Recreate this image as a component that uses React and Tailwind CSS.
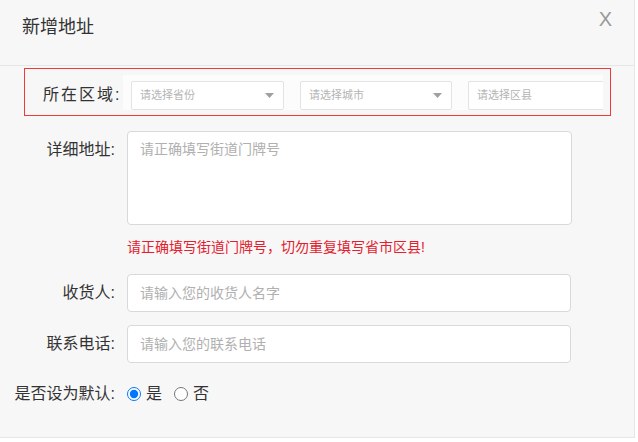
import { useState } from 'react';

const FONT = { fontFamily: '"Liberation Sans", "Noto Sans CJK SC", sans-serif' };

const Caret = () => (
  <svg width="9" height="5" viewBox="0 0 9 5" className="shrink-0">
    <path d="M0 0 L9 0 L4.5 5 Z" fill="#a0a0a0" />
  </svg>
);

const FakeSelect = ({ placeholder, width, caret = true, open = false }) => (
  <div
    className={`flex h-[29px] shrink-0 items-center justify-between rounded-[2px] border border-[#e3e3e3] bg-white pl-[8px] pr-[9px] ${open ? 'border-r-0' : ''}`}
    style={{ width }}
  >
    <span className="text-[11px] text-[#b5b5b5]">{placeholder}</span>
    {caret && <Caret />}
  </div>
);

export default function App() {
  const [isDefault, setIsDefault] = useState('yes');

  return (
    <div className="h-[442px] w-[638px] bg-white" style={FONT}>
      <div className="h-[438px] w-[635px] border-b border-r border-[#e6e6e6] bg-[#f7f7f7]">
        <div className="relative flex h-[66px] items-start border-b border-[#e6e6e6] pl-[22px] pt-[14px]">
          <h2 className="text-[18px] leading-[26px] text-[#333]">新增地址</h2>
          <span className="absolute right-[22px] top-[7px] text-[20px] leading-[24px] text-[#9a9a9a]">X</span>
        </div>

        <div className="ml-[24px] mt-[2px] flex h-[48px] w-[587px] items-start border border-[#f03a3a]">
          <div className="w-[98px] shrink-0 whitespace-nowrap pl-[18px] pt-[16px] text-[16px] leading-[20px] tracking-[2px] text-[#333]">所在区域:</div>
          <div className="mt-[6px] flex h-[35px] w-[480px] shrink-0 items-end gap-[16px] overflow-hidden bg-[#fcfcfc] pl-[8px]">
            <FakeSelect placeholder="请选择省份" width={153} />
            <FakeSelect placeholder="请选择城市" width={152} />
            <FakeSelect placeholder="请选择区县" width={150} caret={false} open />
          </div>
        </div>

        <div className="mt-[15px] flex items-start gap-[12px]">
          <label className="w-[115px] pt-[9px] text-right text-[16px] leading-[20px] text-[#333]">详细地址:</label>
          <textarea
            placeholder="请正确填写街道门牌号"
            className="h-[94px] w-[445px] resize-none rounded-[4px] border border-[#d9d9d9] bg-white px-[12px] py-[7px] text-[14px] leading-[20px] text-[#333] placeholder:text-[#b0b0b0] focus:outline-none"
          />
        </div>
        <p className="ml-[127px] mt-[12px] text-[14px] leading-[20px] text-[#e5202e]">请正确填写街道门牌号，切勿重复填写省市区县!</p>

        <div className="mt-[17px] flex items-center gap-[12px]">
          <label className="w-[115px] text-right text-[16px] text-[#333]">收货人:</label>
          <input
            placeholder="请输入您的收货人名字"
            className="h-[38px] w-[444px] rounded-[4px] border border-[#d9d9d9] bg-white px-[12px] text-[14px] text-[#333] placeholder:text-[#b0b0b0] focus:outline-none"
          />
        </div>

        <div className="mt-[13px] flex items-center gap-[12px]">
          <label className="w-[115px] text-right text-[16px] text-[#333]">联系电话:</label>
          <input
            placeholder="请输入您的联系电话"
            className="h-[38px] w-[444px] rounded-[4px] border border-[#d9d9d9] bg-white px-[12px] text-[14px] text-[#333] placeholder:text-[#b0b0b0] focus:outline-none"
          />
        </div>

        <div className="mt-[21px] flex h-[20px] items-center gap-[12px]">
          <span className="w-[115px] whitespace-nowrap text-right text-[16px] text-[#333]">是否设为默认:</span>
          <div className="flex items-center text-[16px] text-[#333]">
            <label className="flex items-center gap-[5px]">
              <input
                type="radio"
                name="default"
                checked={isDefault === 'yes'}
                onChange={() => setIsDefault('yes')}
                className="m-0 h-[14px] w-[14px]"
              />
              是
            </label>
            <label className="ml-[12px] flex items-center gap-[5px]">
              <input
                type="radio"
                name="default"
                checked={isDefault === 'no'}
                onChange={() => setIsDefault('no')}
                className="m-0 h-[14px] w-[14px]"
              />
              否
            </label>
          </div>
        </div>
      </div>
    </div>
  );
}
